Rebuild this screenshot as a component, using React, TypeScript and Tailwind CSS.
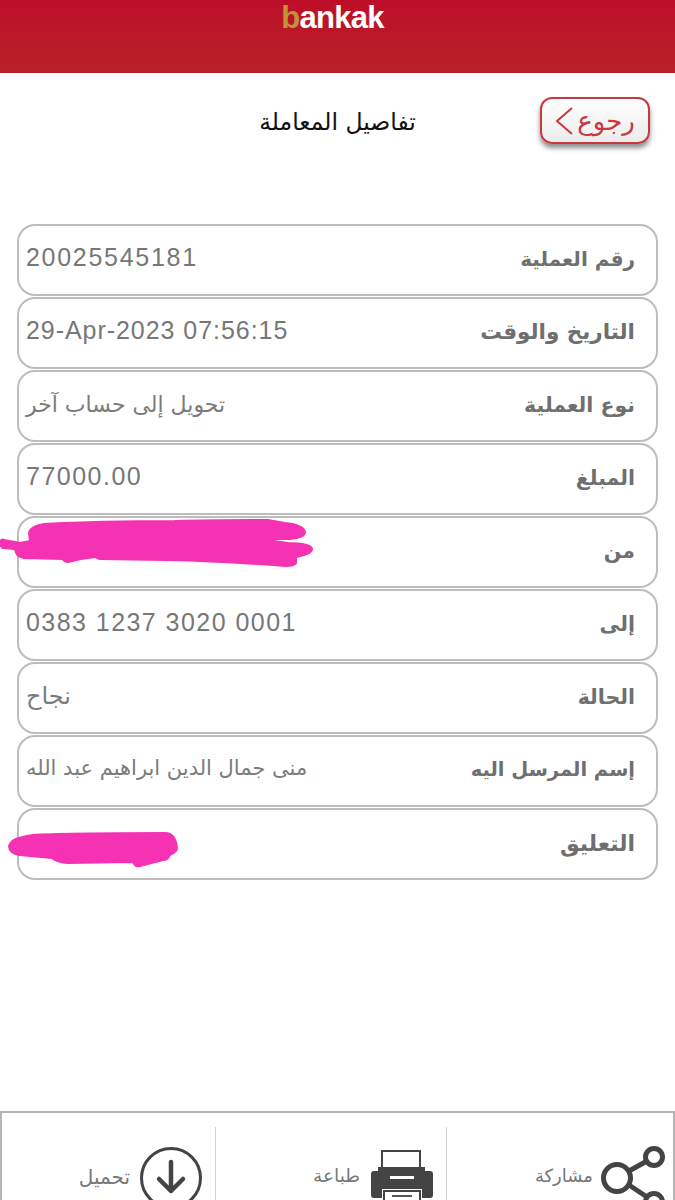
const rows: { label: string; value: string; valueSize?: string; labelSize: string; track?: string; redact?: "from" | "note" }[] = [
  { label: "رقم العملية", labelSize: "text-[20px]", value: "20025545181", track: "tracking-[1.72px]" },
  { label: "التاريخ والوقت", labelSize: "text-[21.5px]", value: "29-Apr-2023 07:56:15", track: "tracking-[0.95px]" },
  { label: "نوع العملية", labelSize: "text-[20.5px]", value: "تحويل إلى حساب آخر", valueSize: "text-[22px]" },
  { label: "المبلغ", labelSize: "text-[20.5px]", value: "77000.00", track: "tracking-[1.5px]" },
  { label: "من", labelSize: "text-[20.5px]", value: "", redact: "from" },
  { label: "إلى", labelSize: "text-[20.5px]", value: "0383 1237 3020 0001", track: "tracking-[1.45px]" },
  { label: "الحالة", labelSize: "text-[20.5px]", value: "نجاح", valueSize: "text-[24px]" },
  { label: "إسم المرسل اليه", labelSize: "text-[19.5px]", value: "منى جمال الدين ابراهيم عبد الله", valueSize: "text-[21px]" },
  { label: "التعليق", labelSize: "text-[22px]", value: "", redact: "note" },
];

function FromScribble() {
  return (
    <svg className="absolute left-[-19px] top-[-18px] overflow-visible" width="330" height="70" viewBox="0 0 330 70" fill="#f532b4" stroke="#f532b4" strokeWidth="2" strokeLinejoin="round">
      <path d="M29 33 C30 27 38 25 44 24 C80 22 130 21 175 21 C210 20 250 20 268 20 L285 23 C295 24 304 27 305 32 C305 36 300 38 290 39 L260 39 L288 43 C300 43 312 45 312 49 C312 53 305 55 296 57 L296 63 C295 65 290 66 285 66 C260 64 220 61 167 60 L100 59 L95 57 C85 58 75 60 68 62 C65 62 63 60 63 59 L24 58 C18 57 16 55 15 49 L3 48 C0 46 0 44 0 43 C0 40 2 39 4 40 L20 43 L30 41 Z" />
    </svg>
  );
}

function NoteScribble() {
  return (
    <svg className="absolute left-[-19px] top-[-10px] overflow-visible" width="190" height="70" viewBox="0 0 190 70" fill="#f532b4" stroke="#f532b4" strokeWidth="2" strokeLinejoin="round">
      <path d="M9 46 C11 40 15 38 33 35 C60 33 120 33 165 33 C172 33 176 38 177 48 C177 52 172 54 170 55 C168 59 165 60 163 60 L140 66 C136 67 134 65 133 62 L67 63 C58 62 54 60 52 58 L20 55 C13 54 9 51 9 46 Z" />
    </svg>
  );
}

function Row({ label, labelSize, value, valueSize, track, redact }: (typeof rows)[number]) {
  return (
    <div className="relative mb-px flex h-[72px] items-center justify-between rounded-[18px] border-2 border-[#bdbdbd] bg-white pl-[7px] pr-[21px]">
      <span
        dir={valueSize ? "rtl" : "ltr"}
        className={
          valueSize
            ? `-mt-[4px] ${valueSize} text-[#7c7c7c]`
            : `-mt-[5px] font-['Liberation_Sans',sans-serif] text-[25px] text-[#777777] ${track ?? ""}`
        }
      >
        {value}
      </span>
      <span dir="rtl" className={`-mt-[2px] ${labelSize} font-bold text-[#6f6f6f]`}>{label}</span>
      {redact === "from" && <FromScribble />}
      {redact === "note" && <NoteScribble />}
    </div>
  );
}

function ShareIcon() {
  return (
    <svg width="64" height="70" viewBox="0 0 64 70" fill="none" stroke="#444444" strokeWidth="5">
      <circle cx="16" cy="34" r="13.5" />
      <circle cx="53" cy="13" r="8.5" />
      <circle cx="53" cy="58" r="8.5" />
      <path d="M28 27 L46 17 M28 41 L46 53" />
    </svg>
  );
}

function PrinterIcon() {
  return (
    <svg width="64" height="60" viewBox="0 0 64 60">
      <path d="M12 18 V2 H50 V18" fill="#fff" stroke="#444" strokeWidth="2" />
      <path d="M8 22 V18 H55 V22 H60 Q63 22 63 25 V46 Q63 49 60 49 H52 V40 H12 V49 H4 Q1 49 1 46 V25 Q1 22 4 22 Z" fill="#444" />
      <rect x="20" y="27" width="24" height="3" fill="#fff" />
      <path d="M14 42 H50 V60 H14 Z" fill="#fff" stroke="#444" strokeWidth="2" />
      <path d="M22 47 H42 M22 52 H42" stroke="#555" strokeWidth="2" />
    </svg>
  );
}

function DownloadIcon() {
  return (
    <svg width="64" height="64" viewBox="0 0 64 64" fill="none" stroke="#444" strokeLinecap="round" strokeLinejoin="round">
      <circle cx="32" cy="32" r="29.5" strokeWidth="3" />
      <path d="M32 16 V45 M20 33 L32 45 L44 33" strokeWidth="4.5" />
    </svg>
  );
}

export default function App() {
  return (
    <div className="h-[1200px] w-[675px] overflow-hidden bg-white font-['DejaVu_Sans',sans-serif]">
      <header className="flex h-[73px] justify-center bg-gradient-to-b from-[#bd0d28] to-[#b92128]">
        <div dir="ltr" className="ml-[-10px] h-[35px] font-['Liberation_Sans',sans-serif] text-[31px] leading-[35px] font-bold tracking-[-0.7px] text-white">
          <span className="text-[#bf9338]">b</span>ankak
        </div>
      </header>

      <div className="relative flex h-[151px] justify-center">
        <h1 dir="rtl" className="mt-[31px] h-[36px] text-[23.5px] leading-[36px] font-normal text-[#111111]">تفاصيل المعاملة</h1>
        <button className="absolute left-[540px] top-[24px] flex h-[47px] w-[110px] items-center justify-center gap-[3px] rounded-[12px] border-[2.5px] border-[#c8383f] bg-gradient-to-b from-white to-[#ececec] text-[#c8383f] shadow-[0_4px_5px_rgba(0,0,0,0.45)]">
          <svg width="19" height="30" viewBox="0 0 19 30" fill="none" stroke="#c8383f" strokeWidth="2">
            <path d="M17 2 L2 15 L17 28" />
          </svg>
          <span dir="rtl" className="text-[26px] leading-none">رجوع</span>
        </button>
      </div>

      <main className="mx-[17px] flex flex-col">
        {rows.map((r) => (
          <Row key={r.label} {...r} />
        ))}
      </main>

      <footer className="mt-[230px] flex h-[120px] items-start border-t-2 border-r-2 border-l-2 border-[#b5b5b5] pt-[14px]">
        <div className="flex h-[90px] w-[214px] items-start justify-end gap-[9px] border-r border-[#d4d4d4] pt-[19px] pr-[12px]">
          <span dir="rtl" className="mt-[16px] text-[20px] text-[#777]">تحميل</span>
          <DownloadIcon />
        </div>
        <div className="flex h-[90px] w-[231px] items-start justify-end gap-[10px] border-r border-[#d4d4d4] pt-[22px] pr-[12px]">
          <span dir="rtl" className="mt-[13px] text-[18.5px] text-[#777]">طباعة</span>
          <PrinterIcon />
        </div>
        <div className="flex h-[90px] flex-1 items-start justify-end gap-[8px] pt-[17px] pr-[8px]">
          <span dir="rtl" className="mt-[18px] text-[18px] text-[#777]">مشاركة</span>
          <ShareIcon />
        </div>
      </footer>
    </div>
  );
}
